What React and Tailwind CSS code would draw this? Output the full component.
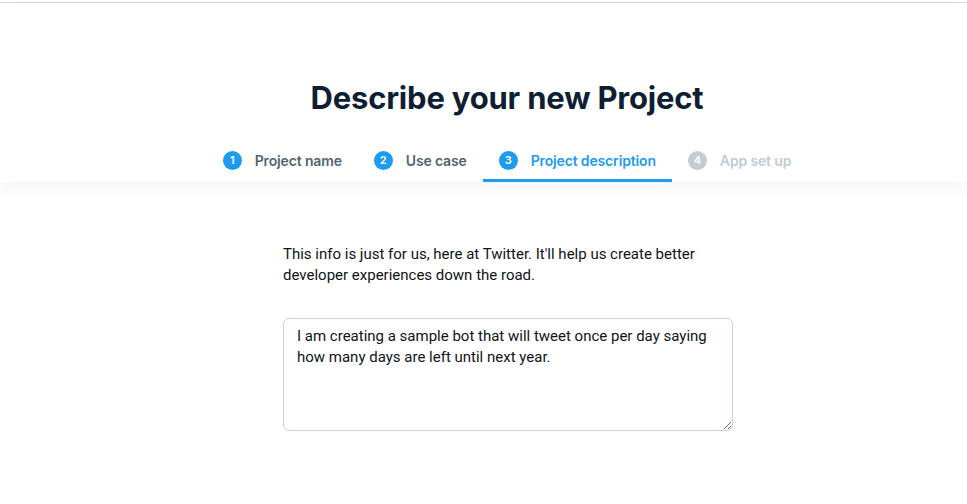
const STEPS = [
  { n: 1, label: 'Project name', state: 'done' },
  { n: 2, label: 'Use case', state: 'done' },
  { n: 3, label: 'Project description', state: 'active' },
  { n: 4, label: 'App set up', state: 'todo' },
]

function Step({ n, label, state }) {
  const active = state === 'active'
  const todo = state === 'todo'
  return (
    <div
      className={
        'flex items-center h-[40px] px-4 border-b-[3px] ' +
        (active ? 'border-[#1d9bf0]' : 'border-transparent')
      }
    >
      <span
        className={
          'flex items-center justify-center w-[19px] h-[19px] rounded-full text-[11px] font-semibold text-white ' +
          (todo ? 'bg-[#c1ccd4]' : 'bg-[#1d9bf0]')
        }
      >
        {n}
      </span>
      <span
        className={
          'ml-[13px] text-[14px] font-semibold tracking-[-0.15px] ' +
          (active ? 'text-[#1d9bf0]' : todo ? 'text-[#c1ccd4]' : 'text-[#536471]')
        }
      >
        {label}
      </span>
    </div>
  )
}

export default function App() {
  return (
    <div className="min-h-[504px] bg-white font-['Inter',sans-serif]">
      <div className="h-[2px]" />
      <div className="h-px bg-[#d9d9d9]" />

      {/* header */}
      <header className="relative z-10 bg-white pl-[47px] shadow-[0_6px_14px_rgba(20,30,40,0.05)]">
        <h1 className="pt-[75px] text-center text-[31px] leading-[40px] font-bold text-[#0f1f33] tracking-[-0.2px]">
          Describe your new Project
        </h1>
        <nav className="mt-[24px] flex justify-center">
          {STEPS.map((s) => (
            <Step key={s.n} {...s} />
          ))}
        </nav>
      </header>

      {/* body */}
      <main className="flex justify-center pl-[49px] pt-[62px]">
        <div className="w-[450px] font-['Roboto',sans-serif] text-[15px] text-[#0f1419]">
          <p className="leading-[21px] pr-[20px]">
            This info is just for us, here at Twitter. It'll help us create better developer experiences down the road.
          </p>
          <textarea
            className="mt-[32px] block w-[450px] h-[113px] rounded-[6px] border border-[#c7d3db] px-[13px] py-[7px] leading-[21px] text-[#0f1419] outline-none resize-y"
            defaultValue="I am creating a sample bot that will tweet once per day saying how many days are left until next year."
          />
        </div>
      </main>
    </div>
  )
}
